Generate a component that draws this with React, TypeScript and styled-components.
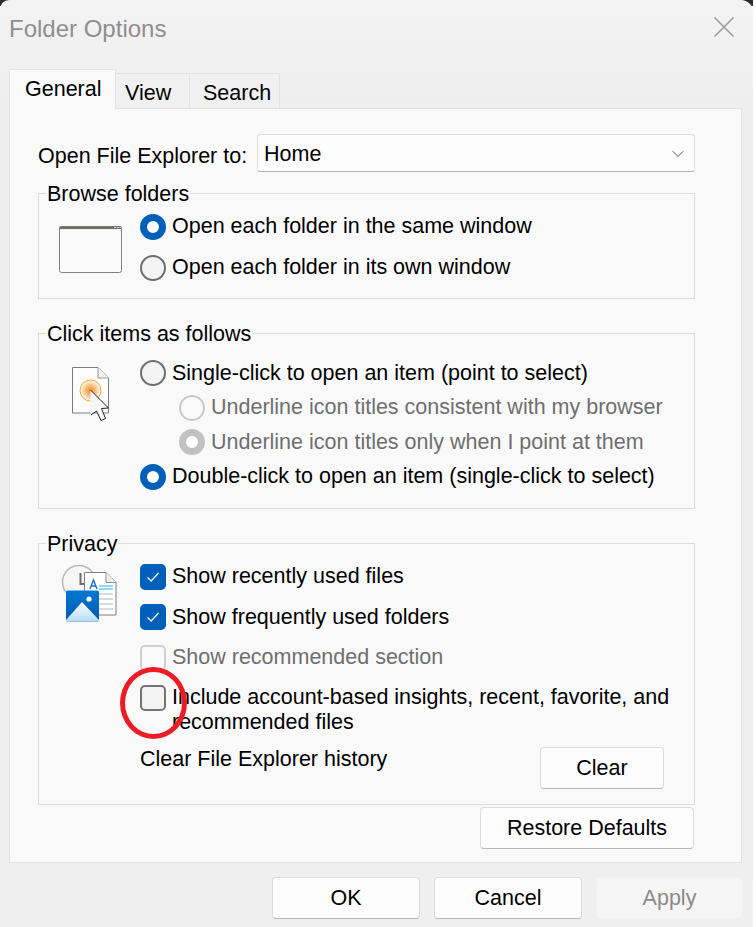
import styled, { createGlobalStyle } from "styled-components";
import { ChevronDown } from "lucide-react";

const GlobalStyle = createGlobalStyle`
  html, body {
    margin: 0;
    padding: 0;
    background: #ffffff;
  }
  body {
    font-family: "Liberation Sans", Arial, sans-serif;
    font-size: 21.5px;
    color: #000000;
  }
`;

const Radio = ({ on, off }: { on?: boolean; off?: boolean }) => <RadioMark $on={on} $off={off} />;

const CheckBox = ({ on, off }: { on?: boolean; off?: boolean }) => (
  <CheckMark $on={on} $off={off}>
    {on && (
      <svg width="16" height="14" viewBox="0 0 16 14" fill="none">
        <path d="M2.5 7.5 L6.2 11 L13.5 3" stroke="#ffffff" strokeWidth="1.3" />
      </svg>
    )}
  </CheckMark>
);

const CloseGlyph = () => (
  <svg width="20" height="20" viewBox="0 0 20 20" fill="none">
    <path d="M0.5 0.5L19.5 19.5M19.5 0.5L0.5 19.5" stroke="#9a9a9a" strokeWidth="1.5" />
  </svg>
);

const WindowIcon = () => (
  <svg width="64" height="48" viewBox="0 0 64 48" fill="none">
    <rect x="0.5" y="0.5" width="62" height="46" rx="2" fill="#fbfbfb" stroke="#808080" strokeWidth="1" />
    <rect x="0.5" y="0.5" width="62" height="2.6" fill="#6f6f6b" />
    <path d="M55 1.6h2M58 1.6h2M60.5 1.6h1.5" stroke="#dddddd" strokeWidth="1" />
  </svg>
);

const ClickIcon = () => (
  <svg width="60" height="75" viewBox="0 0 60 75" fill="none">
    <defs>
      <radialGradient id="glow">
        <stop offset="0%" stopColor="#f28a1c" />
        <stop offset="55%" stopColor="#f9c68c" />
        <stop offset="100%" stopColor="#ffffff" />
      </radialGradient>
    </defs>
    <path d="M12.5 12.5H38L48.5 23V58H12.5Z" fill="#fdfdfd" stroke="#7d7d7d" strokeWidth="1" />
    <path d="M38 12.5V23H48.5" fill="#f1f1f1" stroke="#9a9a9a" strokeWidth="1" />
    <circle cx="30.5" cy="35.5" r="10.5" fill="url(#glow)" stroke="#f6a623" strokeWidth="1" />
    <path d="M30.5 35 L48.5 53 L41 53.5 L45.5 63 L40 65 L36 55.5 L30.5 60Z" fill="#f7f7f7" />
    <path d="M30.5 35 L48.5 53 L41.5 53.5 L45.5 63.5 L41 65.5 L36.5 56 L31 60" stroke="#222222" strokeWidth="1" strokeLinejoin="round" />
  </svg>
);

const PrivacyIcon = () => (
  <svg width="70" height="70" viewBox="0 0 70 70" fill="none">
    <defs>
      <linearGradient id="tile" x1="0" y1="0" x2="0" y2="1">
        <stop offset="0%" stopColor="#0078d4" />
        <stop offset="100%" stopColor="#0058a8" />
      </linearGradient>
      <linearGradient id="peak" x1="0" y1="0" x2="0" y2="1">
        <stop offset="0%" stopColor="#ffffff" />
        <stop offset="100%" stopColor="#b5dcf8" />
      </linearGradient>
    </defs>
    <circle cx="24" cy="24" r="16.5" fill="#f6f6f6" stroke="#b8b8b8" strokeWidth="1.5" />
    <path d="M25.5 15V26H31" stroke="#6e6e6e" strokeWidth="2" />
    <path d="M29.5 14.5H51L61 24.5V57H29.5Z" fill="#ffffff" stroke="#7d7d7d" strokeWidth="1" />
    <path d="M51 14.5V24.5H61" fill="#eeeeee" stroke="#8f8f8f" strokeWidth="1" />
    <path d="M44 28H58M44 31H58" stroke="#19b5ee" strokeWidth="1" />
    <path d="M44 36H58M44 41H58M44 46H58M44 51H58" stroke="#a9b6c2" strokeWidth="1" />
    <path d="M35 31L38.5 22L42 31M36 28H41" stroke="#1c6fc4" strokeWidth="1.4" />
    <rect x="11" y="32.5" width="33" height="31" rx="1.5" fill="url(#tile)" />
    <path d="M11 62L27 44L44 62V63.5H11Z" fill="url(#peak)" />
    <circle cx="34" cy="41" r="2.6" fill="#ffffff" />
  </svg>
);

export default function App() {
  return (
    <Page>
      <GlobalStyle />
      <Window>
        <TitleBar>
          <Title>Folder Options</Title>
          <CloseSlot>
            <CloseGlyph />
          </CloseSlot>
        </TitleBar>

        <TabStrip>
          <Tab $active $width={107} $pad={15}>
            General
          </Tab>
          <Tab $width={74} $pad={9}>
            View
          </Tab>
          <Tab $width={90} $pad={13}>
            Search
          </Tab>
        </TabStrip>

        <Panel>
          <OpenRow>
            <OpenLabel>Open File Explorer to:</OpenLabel>
            <Combo>
              Home
              <ChevronDown size={20} strokeWidth={1} color="#333333" />
            </Combo>
          </OpenRow>

          <Group>
            <Legend>Browse folders</Legend>
            <GroupBody $bottom={10}>
              <IconSlot $left={20} $top={21}>
                <WindowIcon />
              </IconSlot>
              <Options>
                <Option $height={41} $top={1}>
                  <Radio on />
                  Open each folder in the same window
                </Option>
                <Option $height={41}>
                  <Radio />
                  Open each folder in its own window
                </Option>
              </Options>
            </GroupBody>
          </Group>

          <Group $top={21}>
            <Legend>Click items as follows</Legend>
            <GroupBody $bottom={14}>
              <IconSlot $left={21} $top={10}>
                <ClickIcon />
              </IconSlot>
              <Options>
                <Option $height={34.5} $top={11}>
                  <Radio />
                  Single-click to open an item (point to select)
                </Option>
                <Option $height={34.5} $indent={39} $muted>
                  <Radio off />
                  Underline icon titles consistent with my browser
                </Option>
                <Option $height={34.5} $indent={39} $muted>
                  <Radio on off />
                  Underline icon titles only when I point at them
                </Option>
                <Option $height={34.5}>
                  <Radio on />
                  Double-click to open an item (single-click to select)
                </Option>
              </Options>
            </GroupBody>
          </Group>

          <Group $top={21}>
            <Legend>Privacy</Legend>
            <GroupBody $bottom={15}>
              <IconSlot $left={16} $top={3}>
                <PrivacyIcon />
              </IconSlot>
              <Options>
                <Option $height={41} $top={1}>
                  <CheckBox on />
                  Show recently used files
                </Option>
                <Option $height={40.5}>
                  <CheckBox on />
                  Show frequently used folders
                </Option>
                <Option $height={40} $muted>
                  <CheckBox off />
                  Show recommended section
                </Option>
                <WrapOption>
                  <CheckBox />
                  <span>
                    Include account-based insights, recent, favorite, and
                    <br />
                    recommended files
                  </span>
                  <Annotation />
                </WrapOption>
                <ClearRow>
                  <ClearLabel>Clear File Explorer history</ClearLabel>
                  <PanelButton $width={124}>Clear</PanelButton>
                </ClearRow>
              </Options>
            </GroupBody>
          </Group>

          <RestoreRow>
            <PanelButton $width={214}>Restore Defaults</PanelButton>
          </RestoreRow>
        </Panel>

        <Footer>
          <Button $width={148}>OK</Button>
          <Button $width={148}>Cancel</Button>
          <Button $width={147} $disabled>
            Apply
          </Button>
        </Footer>
      </Window>
    </Page>
  );
}

const Page = styled.div`
  width: 756px;
  height: 927px;
  overflow: hidden;
  background: linear-gradient(90deg, #2b2b2b 0, #2b2b2b 753px, #ffffff 753px) top / 100% 6px no-repeat, #ffffff;
`;

const Window = styled.div`
  width: 753px;
  height: 927px;
  box-sizing: border-box;
  display: flex;
  flex-direction: column;
  background: linear-gradient(180deg, #f3f3f3 0, #eeeeee 110px, #efefef 100%);
  border-radius: 9px 12px 0 0;
`;

const TitleBar = styled.div`
  height: 69px;
  flex: none;
  display: flex;
  justify-content: space-between;
  padding: 14px 19px 0 9px;
  box-sizing: border-box;
`;

const Title = styled.div`
  font-size: 24px;
  line-height: 30px;
  color: #8e8e8e;
`;

const CloseSlot = styled.div`
  margin-top: 3px;
  line-height: 0;
`;

const TabStrip = styled.div`
  height: 40px;
  flex: none;
  display: flex;
  align-items: flex-end;
  padding-left: 9px;
  margin-bottom: -1px;
  position: relative;
  z-index: 1;
`;

const Tab = styled.div<{ $active?: boolean; $width: number; $pad: number }>`
  box-sizing: border-box;
  width: ${(p) => p.$width}px;
  height: ${(p) => (p.$active ? "40px" : "36px")};
  padding: 6px 0 0 ${(p) => p.$pad}px;
  line-height: 26px;
  border: 1px solid #e3e3e3;
  border-left-width: ${(p) => (p.$active ? "1px" : "0")};
  border-bottom: ${(p) => (p.$active ? "none" : "1px solid #e3e3e3")};
  background: ${(p) => (p.$active ? "#f9f9f9" : "#f0f0f0")};
`;

const Panel = styled.div`
  width: 733px;
  height: 755px;
  flex: none;
  box-sizing: border-box;
  margin-left: 9px;
  padding: 25px 46px 0 28px;
  background: #f9f9f9;
  border: 1px solid #e3e3e3;
`;

const OpenRow = styled.div`
  display: flex;
  align-items: center;
  justify-content: space-between;
  height: 38px;
  margin-bottom: 8px;
`;

const OpenLabel = styled.div`
  padding-top: 6px;
`;

const Combo = styled.div`
  width: 438px;
  height: 38px;
  box-sizing: border-box;
  display: flex;
  align-items: center;
  justify-content: space-between;
  padding: 2px 6px 0 6px;
  background: #fdfdfd;
  border: 1px solid #dcdcdc;
  border-bottom-color: #b5b5b5;
  border-radius: 3px;
`;

const Group = styled.fieldset<{ $top?: number }>`
  margin: ${(p) => p.$top ?? 0}px 0 0;
  padding: 0;
  min-width: 0;
  border: 1px solid #dddddd;
`;

const Legend = styled.legend`
  margin: 0 0 -1px 7px;
  padding: 2px 1px 0;
  line-height: 24px;
`;

const GroupBody = styled.div<{ $bottom: number }>`
  display: flex;
  padding-bottom: ${(p) => p.$bottom}px;
`;

const IconSlot = styled.div<{ $left: number; $top: number }>`
  width: ${(p) => 101 - p.$left}px;
  padding-left: ${(p) => p.$left}px;
  padding-top: ${(p) => p.$top}px;
  flex: none;
  line-height: 0;
`;

const Options = styled.div`
  flex: 1;
  min-width: 0;
  display: flex;
  flex-direction: column;
`;

const Option = styled.div<{ $height: number; $indent?: number; $muted?: boolean; $top?: number }>`
  height: ${(p) => p.$height}px;
  margin-top: ${(p) => p.$top ?? 0}px;
  padding-left: ${(p) => p.$indent ?? 0}px;
  display: flex;
  align-items: center;
  gap: 6px;
  white-space: nowrap;
  color: ${(p) => (p.$muted ? "#6f6f6f" : "#000000")};
`;

const WrapOption = styled.div`
  position: relative;
  display: flex;
  gap: 6px;
  margin-top: 7px;
  line-height: 25px;
  white-space: nowrap;
`;

const Annotation = styled.div`
  position: absolute;
  left: -20px;
  top: -18px;
  width: 57px;
  height: 62px;
  border: 5px solid #ed1c24;
  border-radius: 50%;
`;

const RadioMark = styled.span<{ $on?: boolean; $off?: boolean }>`
  width: 26px;
  height: 26px;
  box-sizing: border-box;
  flex: none;
  border-radius: 50%;
  border: ${(p) => (p.$on ? "7.5px" : "2px")} solid
    ${(p) => (p.$on ? (p.$off ? "#c2c2c2" : "#005fb8") : p.$off ? "#c8c8c8" : "#6e6e6e")};
  background: ${(p) => (p.$on ? "#ffffff" : p.$off ? "#f9f9f9" : "#f3f3f3")};
`;

const CheckMark = styled.span<{ $on?: boolean; $off?: boolean }>`
  width: 26px;
  height: 26px;
  box-sizing: border-box;
  flex: none;
  display: flex;
  align-items: center;
  justify-content: center;
  border-radius: 5px;
  border: 2px solid ${(p) => (p.$on ? "#005fb8" : p.$off ? "#d0d0d0" : "#737373")};
  background: ${(p) => (p.$on ? "#005fb8" : p.$off ? "#f9f9f9" : "#f3f3f3")};
`;

const ClearRow = styled.div`
  display: flex;
  justify-content: space-between;
  align-items: flex-start;
  padding-right: 30px;
  margin-top: 12px;
`;

const ClearLabel = styled.div`
  line-height: 25px;
`;

const Button = styled.div<{ $width: number; $disabled?: boolean }>`
  width: ${(p) => p.$width}px;
  height: 42px;
  box-sizing: border-box;
  display: flex;
  align-items: center;
  justify-content: center;
  flex: none;
  background: ${(p) => (p.$disabled ? "#f5f5f5" : "#fdfdfd")};
  border: 1px solid ${(p) => (p.$disabled ? "#f0f0f0" : "#dcdcdc")};
  border-bottom-color: ${(p) => (p.$disabled ? "#f0f0f0" : "#b8b8b8")};
  border-radius: 4px;
  color: ${(p) => (p.$disabled ? "#8a8a8a" : "#000000")};
`;

const PanelButton = styled(Button)`
  padding-top: 2px;
`;

const RestoreRow = styled.div`
  display: flex;
  justify-content: flex-end;
  margin-top: 2px;
  padding-right: 1px;
`;

const Footer = styled.div`
  display: flex;
  justify-content: flex-end;
  gap: 14px;
  padding: 14px 10px 0 0;
`;
